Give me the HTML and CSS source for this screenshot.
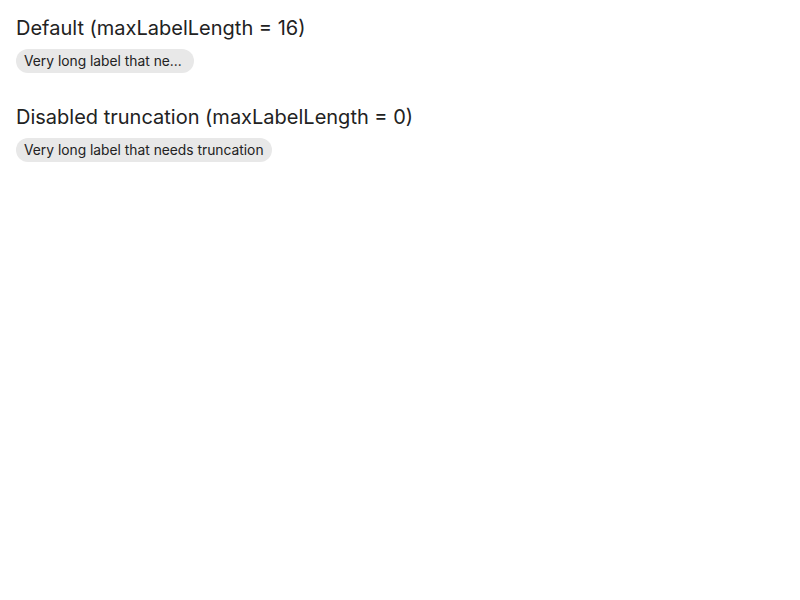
FILE: index.html
```html
<!DOCTYPE html>
<html lang="en">
<head>
<meta charset="utf-8">
<link rel="stylesheet" href="styles.css">
</head>
<body>
<main class="page">
  <section class="demo">
    <h2 class="demo-title">Default (maxLabelLength = 16)</h2>
    <div class="chips"><span class="chip">Very long label that ne... </span></div>
  </section>
  <section class="demo">
    <h2 class="demo-title">Disabled truncation (maxLabelLength = 0)</h2>
    <div class="chips"><span class="chip">Very long label that needs truncation</span></div>
  </section>
</main>
</body>
</html>
```
FILE: styles.css
```css
html, body {
  margin: 0;
  background: #ffffff;
}
body {
  font-family: Inter, "Noto Sans", sans-serif;
  color: #1f1f1f;
}
.page {
  display: flex;
  flex-direction: column;
  gap: 32px;
  padding: 16px;
}
.demo {
  display: flex;
  flex-direction: column;
  gap: 9px;
}
.demo-title {
  margin: 0;
  font-size: 20px;
  line-height: 24px;
  font-weight: 400;
  color: #222222;
}
.chips {
  display: flex;
}
.chip {
  display: inline-flex;
  align-items: center;
  height: 24px;
  padding: 0 8px;
  border-radius: 12px;
  background: #e8e8e8;
  font-size: 13.8px;
  color: #222222;
  white-space: pre;
}
```
